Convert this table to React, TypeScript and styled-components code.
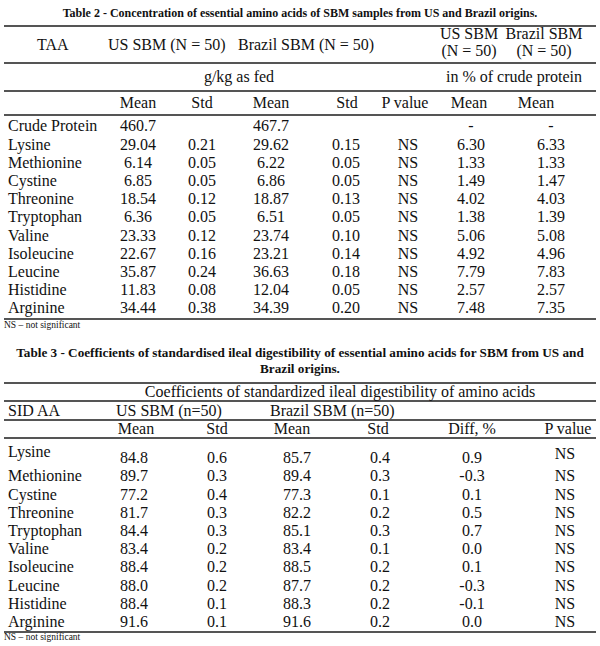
import React from "react";
import styled, { createGlobalStyle } from "styled-components";

const GlobalStyle = createGlobalStyle`
  html, body { margin: 0; padding: 0; background: #ffffff; }
  body { font-family: "Liberation Serif", "Times New Roman", serif; color: #111111; }
`;

const Page = styled.div`
  width: 600px;
  padding: 0 4px;
  box-sizing: border-box;
  display: flex;
  flex-direction: column;
`;

const Caption = styled.div<{ $top: number; $bottom: number; $size: number }>`
  font-weight: bold;
  font-size: ${(p) => p.$size}px;
  line-height: 16.3px;
  text-align: center;
  padding-top: ${(p) => p.$top}px;
  margin-bottom: ${(p) => p.$bottom}px;
  white-space: nowrap;
`;

const Table = styled.div`
  display: flex;
  flex-direction: column;
  border-top: 2px solid #555555;
  font-size: 16px;
`;

const Row = styled.div<{ $cols: string; $h: number; $line?: boolean }>`
  display: grid;
  grid-template-columns: ${(p) => p.$cols};
  align-items: center;
  height: ${(p) => p.$h}px;
  line-height: ${(p) => p.$h}px;
  border-bottom: ${(p) => (p.$line ? "2px solid #555555" : "none")};
`;

const Body = styled.div<{ $pt: number }>`
  display: flex;
  flex-direction: column;
  padding-top: ${(p) => p.$pt}px;
  border-top: 2px solid #555555;
  border-bottom: 2px solid #555555;
`;

const DataRow = styled.div<{ $cols: string }>`
  display: grid;
  grid-template-columns: ${(p) => p.$cols};
  align-items: start;
  line-height: 18.2px;
`;

const Cell = styled.div<{
  $span?: number;
  $left?: boolean;
  $pad?: number;
  $shift?: number;
  $pt?: number;
  $lh?: number;
  $mt?: number;
}>`
  grid-column: span ${(p) => p.$span ?? 1};
  text-align: ${(p) => (p.$left ? "left" : "center")};
  white-space: nowrap;
  padding-left: ${(p) => (p.$left ? p.$pad ?? 0 : Math.max(0, 2 * (p.$shift ?? 0)))}px;
  padding-right: ${(p) => (p.$left ? 0 : Math.max(0, -2 * (p.$shift ?? 0)))}px;
  padding-top: ${(p) => p.$pt ?? 0}px;
  margin-top: ${(p) => p.$mt ?? 0}px;
  ${(p) => (p.$lh ? `line-height: ${p.$lh}px; align-self: start;` : "")}
`;

const Note = styled.div<{ $mt: number }>`
  font-size: 9.5px;
  line-height: 11px;
  margin-top: ${(p) => p.$mt}px;
`;

const T2 = "104px 60px 68px 70px 70px 62px 64px 94px";
const T3 = "96px 70px 94px 62px 110px 72px 88px";

type R2 = [string, string, string, string, string, string, string, string];

const table2: R2[] = [
  ["Crude Protein", "460.7", "", "467.7", "", "", "-", "-"],
  ["Lysine", "29.04", "0.21", "29.62", "0.15", "NS", "6.30", "6.33"],
  ["Methionine", "6.14", "0.05", "6.22", "0.05", "NS", "1.33", "1.33"],
  ["Cystine", "6.85", "0.05", "6.86", "0.05", "NS", "1.49", "1.47"],
  ["Threonine", "18.54", "0.12", "18.87", "0.13", "NS", "4.02", "4.03"],
  ["Tryptophan", "6.36", "0.05", "6.51", "0.05", "NS", "1.38", "1.39"],
  ["Valine", "23.33", "0.12", "23.74", "0.10", "NS", "5.06", "5.08"],
  ["Isoleucine", "22.67", "0.16", "23.21", "0.14", "NS", "4.92", "4.96"],
  ["Leucine", "35.87", "0.24", "36.63", "0.18", "NS", "7.79", "7.83"],
  ["Histidine", "11.83", "0.08", "12.04", "0.05", "NS", "2.57", "2.57"],
  ["Arginine", "34.44", "0.38", "34.39", "0.20", "NS", "7.48", "7.35"],
];

type R3 = [string, string, string, string, string, string, string];

const table3: R3[] = [
  ["Lysine", "84.8", "0.6", "85.7", "0.4", "0.9", "NS"],
  ["Methionine", "89.7", "0.3", "89.4", "0.3", "-0.3", "NS"],
  ["Cystine", "77.2", "0.4", "77.3", "0.1", "0.1", "NS"],
  ["Threonine", "81.7", "0.3", "82.2", "0.2", "0.5", "NS"],
  ["Tryptophan", "84.4", "0.3", "85.1", "0.3", "0.7", "NS"],
  ["Valine", "83.4", "0.2", "83.4", "0.1", "0.0", "NS"],
  ["Isoleucine", "88.4", "0.2", "88.5", "0.2", "0.1", "NS"],
  ["Leucine", "88.0", "0.2", "87.7", "0.2", "-0.3", "NS"],
  ["Histidine", "88.4", "0.1", "88.3", "0.2", "-0.1", "NS"],
  ["Arginine", "91.6", "0.1", "91.6", "0.2", "0.0", "NS"],
];

const shifts2 = [0, 0, 0, 0, 5, 1, 1, 2];
const shifts3 = [0, -1, 0, 2, -1, 0, 13];

export default function App() {
  return (
    <Page>
      <GlobalStyle />
      <Caption $size={12} $top={5} $bottom={4}>
        Table 2 - Concentration of essential amino acids of SBM samples from US and Brazil origins.
      </Caption>
      <Table>
        <Row $cols={T2} $h={35} $line>
          <Cell $left $pad={33}>TAA</Cell>
          <Cell $span={2} $left>US SBM (N = 50)</Cell>
          <Cell $span={3} $left $pad={2}>Brazil SBM (N = 50)</Cell>
          <Cell $shift={-1} $lh={16.5} $mt={-1}>
            US SBM
            <br />
            (N = 50)
          </Cell>
          <Cell $shift={-5} $lh={16.5} $mt={-1}>
            Brazil SBM
            <br />
            (N = 50)
          </Cell>
        </Row>
        <Row $cols={T2} $h={26} $line>
          <Cell />
          <Cell $span={4} $shift={-3}>g/kg as fed</Cell>
          <Cell />
          <Cell $span={2} $shift={-3}>in % of crude protein</Cell>
        </Row>
        <Row $cols={T2} $h={22}>
          <Cell />
          <Cell>Mean</Cell>
          <Cell>Std</Cell>
          <Cell>Mean</Cell>
          <Cell $shift={6}>Std</Cell>
          <Cell $shift={-2}>P value</Cell>
          <Cell $shift={-1}>Mean</Cell>
          <Cell $shift={-13}>Mean</Cell>
        </Row>
        <Body $pt={1}>
          {table2.map((r) => (
            <DataRow key={r[0]} $cols={T2}>
              {r.map((v, i) =>
                i === 0 ? (
                  <Cell key={i} $left $pad={4}>{v}</Cell>
                ) : (
                  <Cell key={i} $shift={shifts2[i]}>{v}</Cell>
                )
              )}
            </DataRow>
          ))}
        </Body>
      </Table>
      <Note $mt={0}>NS – not significant</Note>

      <Caption $size={13.2} $top={14} $bottom={5}>
        Table 3 - Coefficients of standardised ileal digestibility of essential amino acids for SBM from US and
        <br />
        Brazil origins.
      </Caption>
      <Table>
        <Row $cols={T3} $h={16} $line>
          <Cell />
          <Cell $span={6} $shift={-8}>Coefficients of standardized ileal digestibility of amino acids</Cell>
        </Row>
        <Row $cols={T3} $h={17} $line>
          <Cell $left $pad={4}>SID AA</Cell>
          <Cell $span={2} $left $pad={16}>US SBM (n=50)</Cell>
          <Cell $span={4} $left $pad={6}>Brazil SBM (n=50)</Cell>
        </Row>
        <Row $cols={T3} $h={16}>
          <Cell />
          <Cell $shift={1}>Mean</Cell>
          <Cell>Std</Cell>
          <Cell $shift={-3}>Mean</Cell>
          <Cell $shift={-3}>Std</Cell>
          <Cell>Diff, %</Cell>
          <Cell $shift={16}>P value</Cell>
        </Row>
        <Body $pt={0}>
          {table3.map((r, ri) => (
            <DataRow key={r[0]} $cols={T3}>
              {r.map((v, i) =>
                i === 0 ? (
                  <Cell key={i} $left $pad={4} $pt={ri === 0 ? 4 : 0}>{v}</Cell>
                ) : (
                  <Cell key={i} $shift={shifts3[i]} $pt={ri === 0 ? (i === 6 ? 6 : 10) : 0}>{v}</Cell>
                )
              )}
            </DataRow>
          ))}
        </Body>
      </Table>
      <Note $mt={-1}>NS – not significant</Note>
    </Page>
  );
}
